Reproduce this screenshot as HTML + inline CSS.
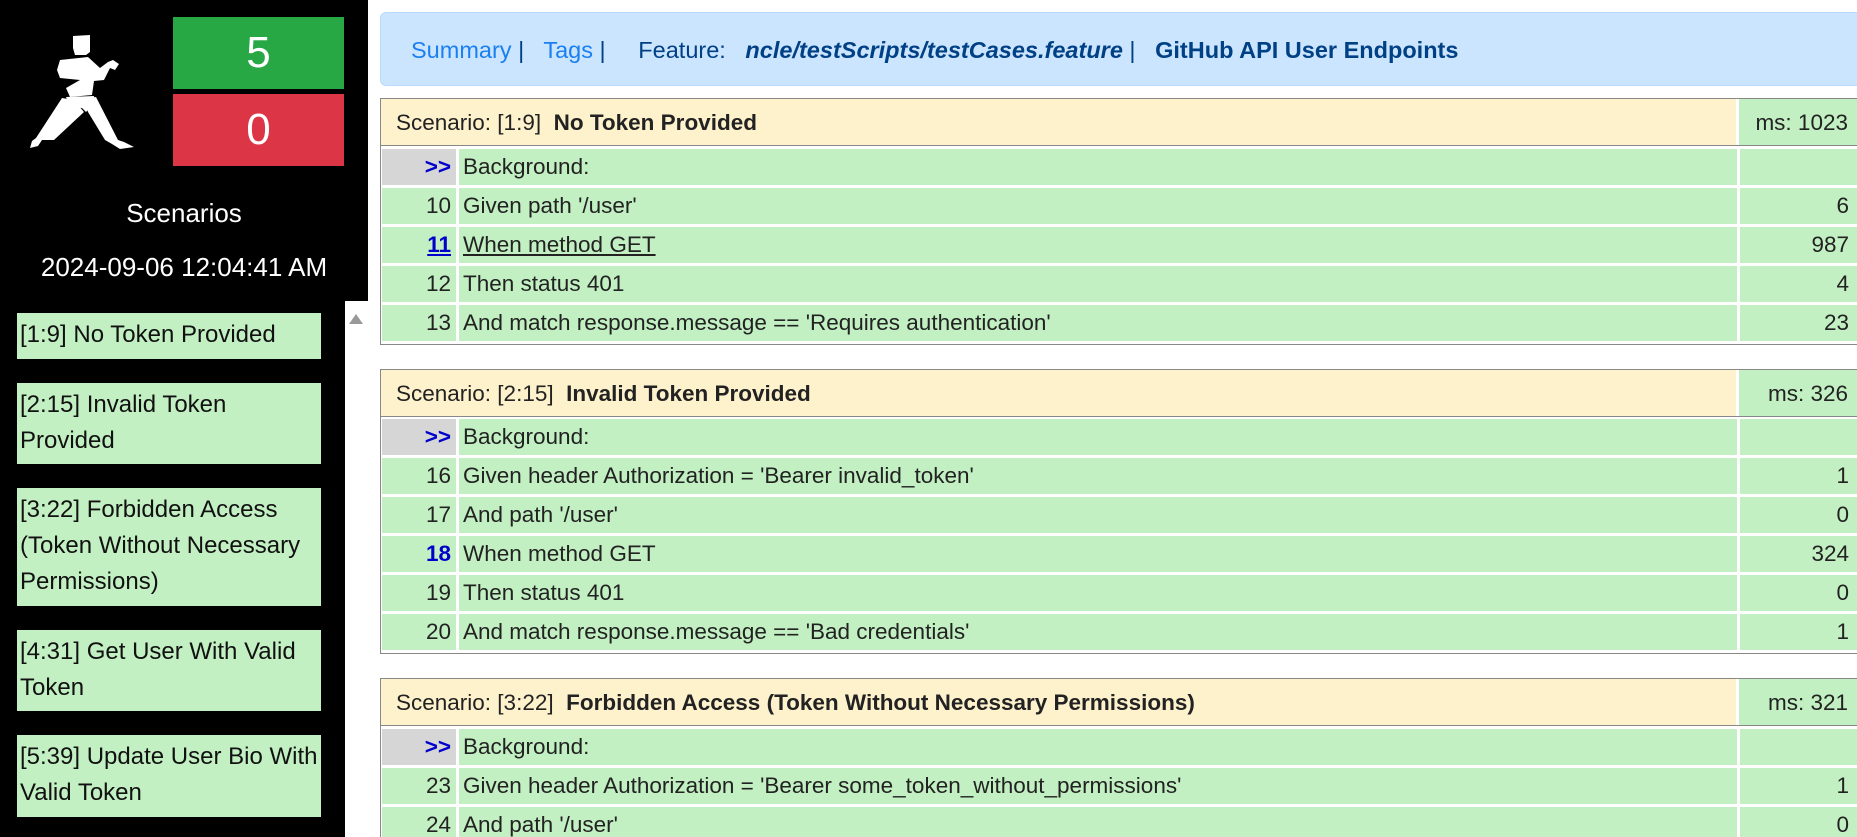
<!DOCTYPE html>
<html style="overflow:hidden"><head><meta charset="utf-8"><style>
*{box-sizing:border-box;margin:0;padding:0}
html,body{width:1857px;height:837px;overflow:hidden}
body{background:#fff;font-family:"Liberation Sans",sans-serif;position:relative;color:#222}
.side{position:absolute;left:0;top:0;width:368px;height:837px;background:#000}
.abs{position:absolute}
.box{position:absolute;left:173px;width:171px;height:72px;color:#fff;font-size:44px;text-align:center;line-height:72px}
.item{position:absolute;left:17px;width:304px;background:#c2f0c2;color:#111;font-size:24px;line-height:36px;padding:4px 3px}
.hdr{position:absolute;left:380px;top:12px;width:1490px;height:74px;background:#cce5ff;border:1px solid #b8daff;border-radius:6px;font-size:23.5px;line-height:74px;padding-left:30px;white-space:nowrap}
.tbl{position:absolute;left:380px;width:1490px;border:1px solid #888;background:#fff;overflow:hidden}
.r{position:absolute;left:0;right:0;height:36px;font-size:22.5px;line-height:36px;white-space:nowrap}
.r div{position:absolute;top:0;bottom:0;background:#c2f0c2}
.c1{left:1px;width:74px;text-align:right;padding-right:5px}
.c2{left:78px;width:1278px;padding-left:4px}
.c3{left:1359px;width:118px;text-align:right;padding-right:9px}
.th{position:absolute;left:0;right:0;top:0;height:47px;border-bottom:1px solid #888;font-size:22.5px;line-height:47px}
.th .a{position:absolute;left:0;top:0;bottom:0;width:1355px;background:#fef2cd;padding-left:15px}
.th .b{position:absolute;left:1358px;top:0;bottom:0;width:119px;background:#c2f0c2;text-align:right;padding-right:10px}
.gr{background:#d6d6d6!important;color:#00c;font-weight:bold}
</style></head><body>
<div class="side">
<svg class="abs" style="left:0;top:0" width="160" height="160" viewBox="0 0 160 160" fill="#fff">
<path d="M73 36 L90 35 L90 52 L86 55 L75 55 L73 48 Z"/>
<path d="M60 60 L88 57 L100 68 L108 62 L113 60 L119 64 L115 70 L110 68 L104 80 L94 81 L92 95 L70 97 L66 88 L80 80 L60 78 L57 70 Z"/>
<path d="M66 97 L94 96 L96 108 L90 108 L86 112 L82 108 L70 107 Z"/>
<path d="M62 98 L74 100 L84 112 L54 140 L42 140 L38 146 L30 148 L32 141 L36 138 Z"/>
<path d="M84 99 L96 97 L118 140 L124 142 L134 147 L120 149 L112 144 L105 140 L88 112 Z"/>
</svg>
<div class="box" style="top:17px;background:#28a745">5</div>
<div class="box" style="top:94px;background:#dc3545">0</div>
<div class="abs" style="left:0;width:368px;top:198px;text-align:center;color:#fff;font-size:26px">Scenarios</div>
<div class="abs" style="left:0;width:368px;top:252px;text-align:center;color:#fff;font-size:26px">2024-09-06 12:04:41 AM</div>
<div class="abs" style="left:345px;top:301px;width:23px;height:536px;background:#fff"></div>
<div class="abs" style="left:349px;top:314px;width:0;height:0;border-left:7px solid transparent;border-right:7px solid transparent;border-bottom:10px solid #999"></div>
<div class="item" style="top:313px;height:46px">[1:9] No Token Provided</div>
<div class="item" style="top:383px;height:81px">[2:15] Invalid Token Provided</div>
<div class="item" style="top:488px;height:118px">[3:22] Forbidden Access (Token Without Necessary Permissions)</div>
<div class="item" style="top:630px;height:81px">[4:31] Get User With Valid Token</div>
<div class="item" style="top:735px;height:82px">[5:39] Update User Bio With Valid Token</div>
</div>

<div class="hdr"><span style="color:#1a7ff0">Summary</span> <span style="color:#004085">|</span>&nbsp;&nbsp; <span style="color:#1a7ff0">Tags</span> <span style="color:#004085">|</span>&nbsp;&nbsp;&nbsp;&nbsp; <span style="color:#004085">Feature:</span>&nbsp;&nbsp; <b><i style="color:#004085">ncle/testScripts/testCases.feature</i></b> <span style="color:#004085">|</span>&nbsp;&nbsp; <b style="color:#004085">GitHub API User Endpoints</b></div>

<div class="tbl" style="top:98px;height:247px">
<div class="th"><div class="a">Scenario: [1:9]&nbsp; <b>No Token Provided</b></div><div class="b">ms: 1023</div></div>
<div class="r" style="top:50px"><div class="c1 gr">&gt;&gt;</div><div class="c2">Background:</div><div class="c3"></div></div>
<div class="r" style="top:89px"><div class="c1">10</div><div class="c2">Given path '/user'</div><div class="c3">6</div></div>
<div class="r" style="top:128px"><div class="c1" style="color:#00c;font-weight:bold;text-decoration:underline">11</div><div class="c2"><u>When method GET</u></div><div class="c3">987</div></div>
<div class="r" style="top:167px"><div class="c1">12</div><div class="c2">Then status 401</div><div class="c3">4</div></div>
<div class="r" style="top:206px"><div class="c1">13</div><div class="c2">And match response.message == 'Requires authentication'</div><div class="c3">23</div></div>
</div>

<div class="tbl" style="top:369px;height:285px">
<div class="th"><div class="a">Scenario: [2:15]&nbsp; <b>Invalid Token Provided</b></div><div class="b">ms: 326</div></div>
<div class="r" style="top:49px"><div class="c1 gr">&gt;&gt;</div><div class="c2">Background:</div><div class="c3"></div></div>
<div class="r" style="top:88px"><div class="c1">16</div><div class="c2">Given header Authorization = 'Bearer invalid_token'</div><div class="c3">1</div></div>
<div class="r" style="top:127px"><div class="c1">17</div><div class="c2">And path '/user'</div><div class="c3">0</div></div>
<div class="r" style="top:166px"><div class="c1" style="color:#00c;font-weight:bold">18</div><div class="c2">When method GET</div><div class="c3">324</div></div>
<div class="r" style="top:205px"><div class="c1">19</div><div class="c2">Then status 401</div><div class="c3">0</div></div>
<div class="r" style="top:244px"><div class="c1">20</div><div class="c2">And match response.message == 'Bad credentials'</div><div class="c3">1</div></div>
</div>

<div class="tbl" style="top:678px;height:170px">
<div class="th"><div class="a">Scenario: [3:22]&nbsp; <b>Forbidden Access (Token Without Necessary Permissions)</b></div><div class="b">ms: 321</div></div>
<div class="r" style="top:50px"><div class="c1 gr">&gt;&gt;</div><div class="c2">Background:</div><div class="c3"></div></div>
<div class="r" style="top:89px"><div class="c1">23</div><div class="c2">Given header Authorization = 'Bearer some_token_without_permissions'</div><div class="c3">1</div></div>
<div class="r" style="top:128px"><div class="c1">24</div><div class="c2">And path '/user'</div><div class="c3">0</div></div>
</div>
</body></html>
